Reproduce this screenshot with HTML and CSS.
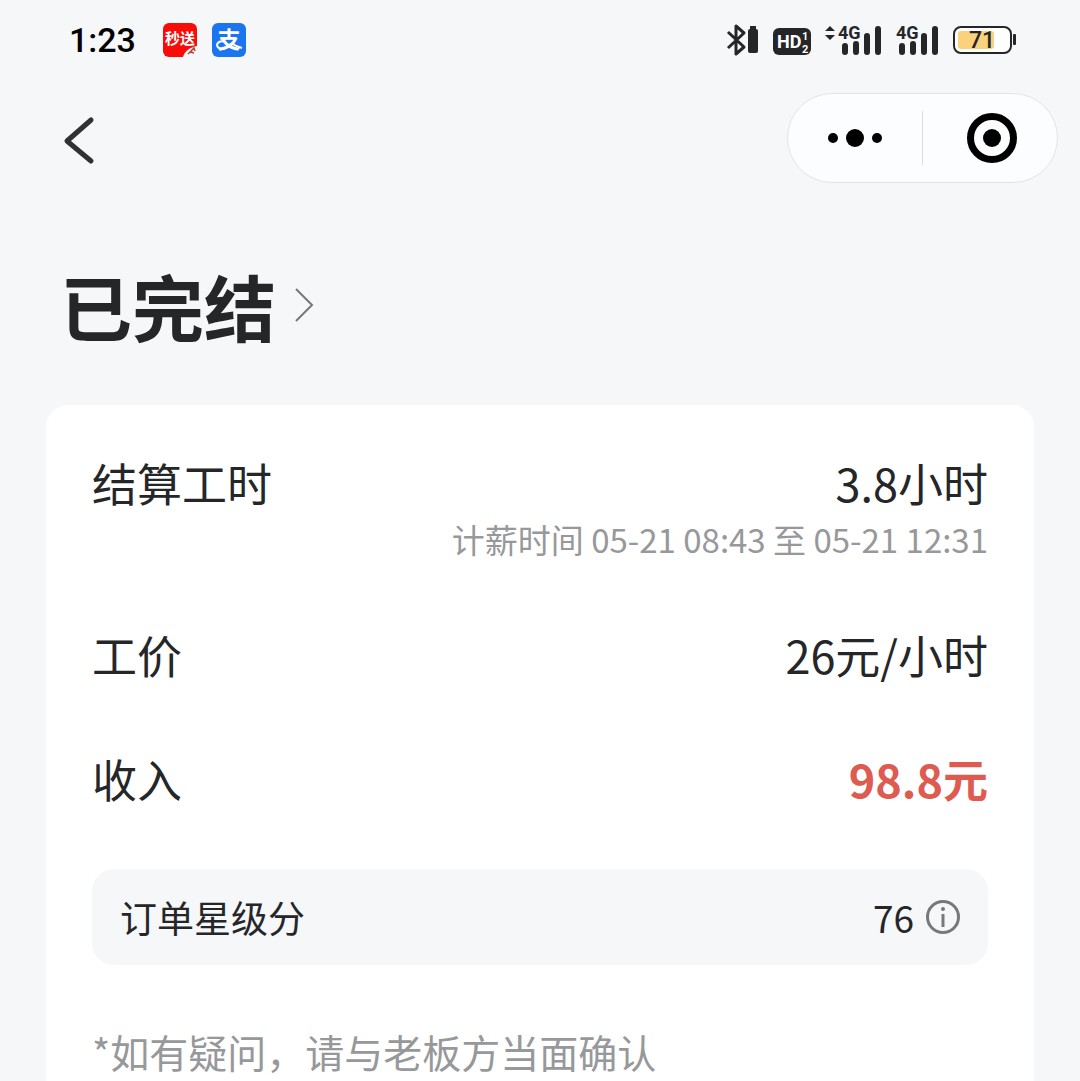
FILE: index.html
```html
<!DOCTYPE html>
<html lang="zh-CN">

<head>
    <meta charset="UTF-8">
    <meta name="viewport" content="width=device-width, initial-scale=1.0">
    <title>已完结</title>
    <link rel="stylesheet" href="styles.css">
</head>

<body>
    <div class="status-bar">
        <span class="time">1:23</span>
        <svg class="app-icon" width="34" height="34" viewBox="0 0 34 34">
            <rect width="34" height="34" rx="6" fill="#f90b08" />
            <path d="M34 23C27 24 21 29 20 34H34Z" fill="#f6f7f9" />
            <path d="M25 31l3-3 2 2M28 28l3-3 1 3M27 29l4 1" stroke="#b5443c" stroke-width="1.5" fill="none" />
            <text class="icon-text" x="17" y="21" font-size="15" fill="#fff">秒送</text>
        </svg>
        <svg class="app-icon" width="34" height="34" viewBox="0 0 34 34">
            <rect width="34" height="34" rx="6" fill="#1b75f0" />
            <text class="icon-text" x="17" y="25" font-size="23" fill="#fff">支</text>
            <path d="M13 19C8 17 5 20 5 22C6 27 13 27 18 21M19 20C22 22 26 24 30 25" stroke="#fff" stroke-width="2" fill="none" />
        </svg>
        <div class="status-right">
            <svg width="33" height="36" viewBox="0 0 33 36">
                <path d="M2 10L18 25L10 32V4L18 11L2 26" fill="none" stroke="#252628" stroke-width="3" stroke-linejoin="round" />
                <rect x="22" y="7" width="10" height="24" rx="2" fill="#252628" />
                <rect x="24" y="4" width="6" height="4" fill="#252628" />
            </svg>
            <svg width="38" height="36" viewBox="0 0 38 36">
                <rect y="6" width="38" height="27" rx="6" fill="#252628" />
                <text class="latin" x="4" y="26" font-size="18" fill="#fff">HD</text>
                <text class="latin" x="29" y="18" font-size="11" fill="#fff">1</text>
                <text class="latin" x="29" y="31" font-size="11" fill="#fff">2</text>
            </svg>
            <svg width="57" height="36" viewBox="0 0 57 36">
                <path d="M0 9L5 4L10 9ZM0 13H10L5 18Z" fill="#252628" />
                <text class="latin" x="13" y="17" font-size="18" fill="#252628">4G</text>
                <path d="M20 24V30M31 22V30M42 14V30M53 7V30" stroke="#252628" stroke-width="6" stroke-linecap="round" />
            </svg>
            <svg width="43" height="36" viewBox="0 0 43 36">
                <text class="latin" x="0" y="17" font-size="18" fill="#252628">4G</text>
                <path d="M6 24V30M17 22V30M28 14V30M39 7V30" stroke="#252628" stroke-width="6" stroke-linecap="round" />
            </svg>
            <svg width="63" height="36" viewBox="0 0 63 36">
                <rect x="1" y="5" width="57" height="26" rx="7" fill="#fff" stroke="#252628" stroke-width="2" />
                <rect x="5" y="9" width="36" height="18" rx="3" fill="#fad27c" />
                <rect x="60" y="12" width="3" height="11" rx="1" fill="#252628" />
                <text class="battery-text" x="29" y="26" font-size="23" fill="#252628">71</text>
            </svg>
        </div>
    </div>

    <nav class="nav-bar">
        <button class="back" aria-label="返回">
            <svg width="34" height="50" viewBox="0 0 34 50">
                <path d="M29 7L5 28L29 48" fill="none" stroke="#303133" stroke-width="5" stroke-linecap="round" stroke-linejoin="round" />
            </svg>
        </button>
        <div class="capsule">
            <button aria-label="更多">
                <svg width="54" height="18" viewBox="0 0 54 18">
                    <circle cx="5" cy="9" r="5" />
                    <circle cx="27" cy="9" r="9" />
                    <circle cx="49" cy="9" r="5" />
                </svg>
            </button>
            <span class="divider"></span>
            <button aria-label="关闭">
                <svg width="50" height="50" viewBox="0 0 50 50">
                    <circle cx="27" cy="25" r="21.5" fill="none" stroke="#000" stroke-width="7" />
                    <circle cx="27" cy="25" r="9" />
                </svg>
            </button>
        </div>
    </nav>

    <h1 class="title">
        <a href="#"><span>已完结</span>
            <svg width="20" height="36" viewBox="0 0 20 36">
                <path d="M2 2L18 18L2 34" fill="none" stroke="#77787a" stroke-width="2" />
            </svg>
        </a>
    </h1>

    <main class="card">
        <div class="row">
            <span>结算工时</span>
            <span>3.8小时</span>
        </div>
        <p class="period">计薪时间 05-21 08:43 至 05-21 12:31</p>
        <div class="row price">
            <span>工价</span>
            <span>26元/小时</span>
        </div>
        <div class="row income">
            <span>收入</span>
            <span class="amount">98.8元</span>
        </div>
        <div class="score">
            <span>订单星级分</span>
            <span class="score-value">76</span>
            <button aria-label="说明">
                <svg width="34" height="34" viewBox="0 0 34 34">
                    <circle cx="17" cy="17" r="15.5" fill="none" stroke="#77787a" stroke-width="3" />
                    <circle cx="17" cy="9" r="2" fill="#77787a" />
                    <path d="M17 14V27" stroke="#77787a" stroke-width="3" />
                </svg>
            </button>
        </div>
        <p class="note">*如有疑问，请与老板方当面确认</p>
    </main>
</body>

</html>
```
FILE: styles.css
```css
:root {
    --page-color: #f6f7f9;
    --text-color: #252628;
    --muted-color: #97989a;
    --amount-color: #de5b51;
}

* {
    box-sizing: border-box;
    margin: 0;
}

body {
    display: flex;
    flex-direction: column;
    min-height: 100vh;
    background-color: var(--page-color);
    color: var(--text-color);
    font-family: "Noto Sans CJK SC", sans-serif;
}

svg {
    display: block;
    flex: none;
    overflow: visible;
}

button {
    display: flex;
    align-items: center;
    justify-content: center;
    padding: 0;
    border: none;
    background: none;
}

.status-bar {
    display: flex;
    align-items: center;
    height: 80px;
    padding: 0 64px 0 69px;
}

.time {
    margin-right: 27px;
    color: #000;
    font: 500 34px Roboto, sans-serif;
}

.app-icon {
    margin-right: 15px;
}

.icon-text {
    font-weight: 700;
    text-anchor: middle;
}

.latin {
    font-family: Roboto, sans-serif;
    font-weight: 700;
}

.battery-text {
    font-family: Roboto, sans-serif;
    font-weight: 500;
    text-anchor: middle;
}

.status-right {
    display: flex;
    gap: 14px;
    margin-left: auto;
}

.nav-bar {
    display: flex;
    align-items: center;
    justify-content: space-between;
    height: 116px;
    padding: 0 22px 0 62px;
}

.capsule {
    display: flex;
    align-items: center;
    width: 271px;
    height: 90px;
    border: 1px solid #e3e4e6;
    border-radius: 45px;
    background-color: #fcfdff;
}

.capsule button {
    flex: 1;
    height: 100%;
}

.divider {
    width: 1px;
    height: 54px;
    background-color: #dcdddf;
}

.title {
    padding: 56px 60px 48px;
    font-size: 72px;
    font-weight: 700;
    line-height: 105px;
}

.title a {
    display: inline-flex;
    align-items: center;
    gap: 18px;
    color: inherit;
    text-decoration: none;
}

.card {
    flex: 1;
    margin: 0 46px;
    padding: 48px 46px 0;
    border-radius: 22px 22px 0 0;
    background-color: #fff;
}

.row {
    display: flex;
    justify-content: space-between;
    font-size: 45px;
    line-height: 60px;
}

.period {
    color: var(--muted-color);
    font-size: 33px;
    line-height: 52px;
    text-align: right;
}

.price {
    margin-top: 60px;
}

.income {
    margin-top: 64px;
}

.amount {
    color: var(--amount-color);
    font-weight: 700;
}

.score {
    display: flex;
    align-items: center;
    height: 96px;
    margin-top: 60px;
    padding: 0 28px;
    border-radius: 22px;
    background-color: var(--page-color);
    font-size: 37px;
}

.score-value {
    margin: 0 12px 0 auto;
}

.note {
    margin-top: 58px;
    color: var(--muted-color);
    font-size: 39px;
    line-height: 56px;
}
```
